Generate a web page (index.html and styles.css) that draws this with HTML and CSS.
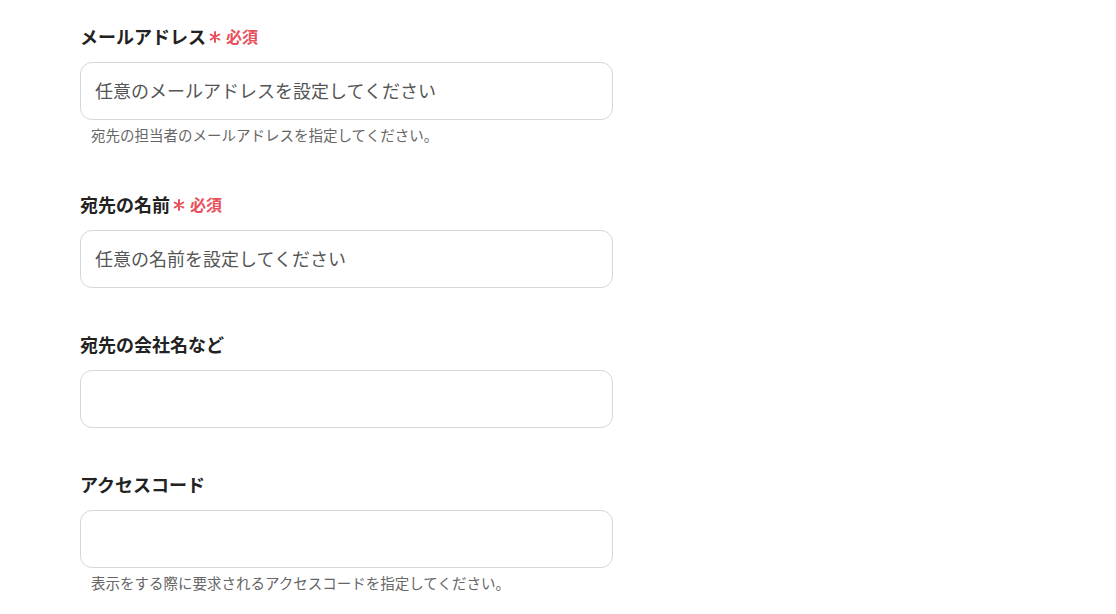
FILE: index.html
```html
<!DOCTYPE html>
<html lang="ja">
<head>
  <meta charset="UTF-8">
  <title>フォーム</title>
  <link rel="stylesheet" href="styles.css">
</head>
<body>

<form class="form">
  <div class="field">
    <label class="label" for="email">メールアドレス
      <span class="required">
        <svg class="star" viewBox="0 0 12 12" width="12" height="12"><path d="M6 1v10M1.7 3.5l8.6 5M1.7 8.5l8.6-5" stroke="currentColor" stroke-width="2" stroke-linecap="round"/></svg>必須
      </span>
    </label>
    <input class="input" id="email" type="text" placeholder="任意のメールアドレスを設定してください">
    <p class="hint">宛先の担当者のメールアドレスを指定してください。</p>
  </div>

  <div class="field">
    <label class="label" for="name">宛先の名前
      <span class="required">
        <svg class="star" viewBox="0 0 12 12" width="12" height="12"><path d="M6 1v10M1.7 3.5l8.6 5M1.7 8.5l8.6-5" stroke="currentColor" stroke-width="2" stroke-linecap="round"/></svg>必須
      </span>
    </label>
    <input class="input" id="name" type="text" placeholder="任意の名前を設定してください">
  </div>

  <div class="field">
    <label class="label" for="company">宛先の会社名など</label>
    <input class="input" id="company" type="text">
  </div>

  <div class="field">
    <label class="label" for="code">アクセスコード</label>
    <input class="input" id="code" type="text">
    <p class="hint">表示をする際に要求されるアクセスコードを指定してください。</p>
  </div>
</form>

</body>
</html>
```

FILE: styles.css
```css
body {
  margin: 0;
  padding: 24px 0 0 80px;
  font-family: "Noto Sans CJK JP", "Noto Sans", sans-serif;
  color: #222;
  background: #fff;
}
.form {
  width: 533px;
  display: flex;
  flex-direction: column;
  gap: 44px;
}
.field {
  display: flex;
  flex-direction: column;
}
.label {
  display: flex;
  align-items: center;
  height: 24px;
  font-size: 18px;
  font-weight: bold;
  line-height: 24px;
  color: #222;
}
.required {
  display: inline-flex;
  align-items: center;
  margin-left: 3px;
  font-size: 16px;
  color: #e8505b;
}
.star {
  margin: 2px 5px 0 0;
}
.input {
  box-sizing: border-box;
  margin-top: 14px;
  width: 533px;
  height: 58px;
  padding: 0 14px 2px;
  border: 1px solid #d3d6db;
  border-radius: 12px;
  font-family: inherit;
  font-size: 18px;
  color: #222;
  outline: none;
}
.input::placeholder {
  color: #555;
}
.hint {
  margin: 5px 0 3px 11px;
  font-size: 14.5px;
  line-height: 20px;
  color: #666;
}
```
